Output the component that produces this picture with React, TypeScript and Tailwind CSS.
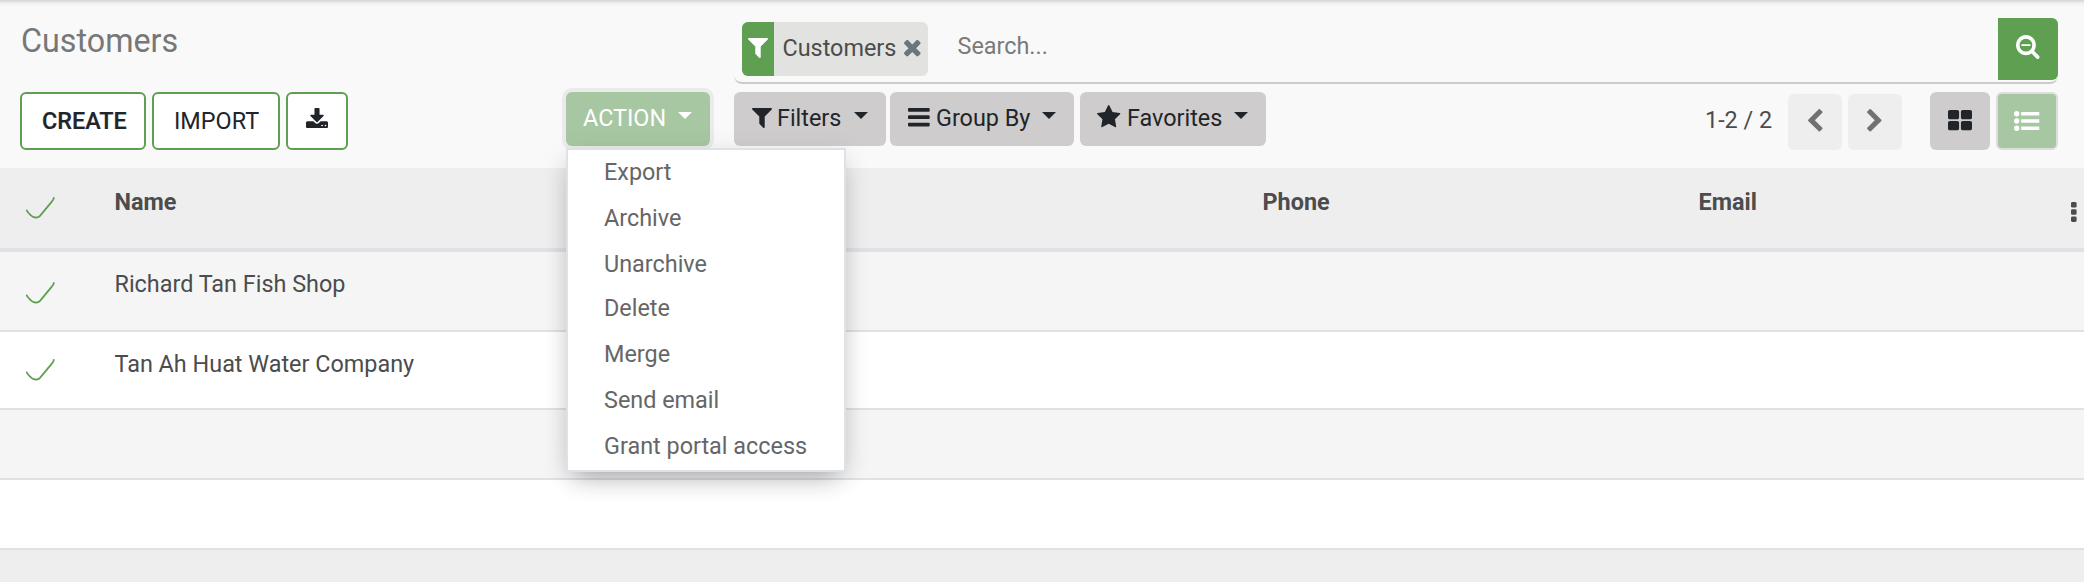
import type { ReactNode } from "react";

const PATHS = {
  filter: {
    box: "191 256 1410 1408",
    d: "M1595 295q17 41-14 70l-493 493v742q0 42-39 59-13 5-25 5-27 0-45-19l-256-256q-19-19-19-45v-486l-493-493q-31-29-14-70 17-39 59-39h1280q42 0 59 39z",
  },
  bars: {
    box: "128 256 1536 1280",
    d: "M1664 1344v128q0 26-19 45t-45 19h-1408q-26 0-45-19t-19-45v-128q0-26 19-45t45-19h1408q26 0 45 19t19 45zm0-512v128q0 26-19 45t-45 19h-1408q-26 0-45-19t-19-45v-128q0-26 19-45t45-19h1408q26 0 45 19t19 45zm0-512v128q0 26-19 45t-45 19h-1408q-26 0-45-19t-19-45v-128q0-26 19-45t45-19h1408q26 0 45 19t19 45z",
  },
  star: {
    box: "64 32 1664 1587",
    d: "M1728 647q0 22-26 48l-363 354 86 500q1 7 1 20 0 21-10.5 35.5t-30.5 14.5q-19 0-40-12l-449-236-449 236q-22 12-40 12-21 0-31.5-14.5t-10.5-35.5q0-6 2-20l86-500-364-354q-25-27-25-48 0-37 56-46l502-73 225-455q19-41 49-41t49 41l225 455 502 73q56 9 56 46z",
  },
  zoomOut: {
    box: "64 128 1664 1664",
    d: "M1088 800v64q0 13-9.5 22.5t-22.5 9.5h-576q-13 0-22.5-9.5t-9.5-22.5v-64q0-13 9.5-22.5t22.5-9.5h576q13 0 22.5 9.5t9.5 22.5zm128 32q0-185-131.5-316.5t-316.5-131.5-316.5 131.5-131.5 316.5 131.5 316.5 316.5 131.5 316.5-131.5 131.5-316.5zm512 832q0 53-37.5 90.5t-90.5 37.5q-54 0-90-38l-343-342q-179 124-399 124-143 0-273.5-55.5t-225-150-150-225-55.5-273.5 55.5-273.5 150-225 225-150 273.5-55.5 273.5 55.5 225 150 150 225 55.5 273.5q0 220-124 399l343 343q37 37 37 90z",
  },
  times: {
    box: "302 302 1188 1188",
    d: "M1490 1322q0 40-28 68l-136 136q-28 28-68 28t-68-28l-294-294-294 294q-28 28-68 28t-68-28l-136-136q-28-28-28-68t28-68l294-294-294-294q-28-28-28-68t28-68l136-136q28-28 68-28t68 28l294 294 294-294q28-28 68-28t68 28l136 136q28 28 28 68t-28 68l-294 294 294 294q28 28 28 68z",
  },
  left: {
    box: "410 26 1036 1612",
    d: "M1427 301l-531 531 531 531q19 19 19 45t-19 45l-166 166q-19 19-45 19t-45-19l-742-742q-19-19-19-45t19-45l742-742q19-19 45-19t45 19l166 166q19 19 19 45t-19 45z",
  },
  right: {
    box: "346 26 1036 1612",
    d: "M1363 877l-742 742q-19 19-45 19t-45-19l-166-166q-19-19-19-45t19-45l531-531-531-531q-19-19-19-45t19-45l166-166q19-19 45-19t45 19l742 742q19 19 19 45t-19 45z",
  },
  grid: {
    box: "64 128 1664 1408",
    d: "M832 1024v384q0 52-38 90t-90 38h-512q-52 0-90-38t-38-90v-384q0-52 38-90t90-38h512q52 0 90 38t38 90zm0-768v384q0 52-38 90t-90 38h-512q-52 0-90-38t-38-90v-384q0-52 38-90t90-38h512q52 0 90 38t38 90zm896 768v384q0 52-38 90t-90 38h-512q-52 0-90-38t-38-90v-384q0-52 38-90t90-38h512q52 0 90 38t38 90zm0-768v384q0 52-38 90t-90 38h-512q-52 0-90-38t-38-90v-384q0-52 38-90t90-38h512q52 0 90 38t38 90z",
  },
  list: {
    box: "0 192 1792 1408",
    d: "M384 1408a192 192 0 1 1-384 0a192 192 0 1 1 384 0zM384 896a192 192 0 1 1-384 0a192 192 0 1 1 384 0zM384 384a192 192 0 1 1-384 0a192 192 0 1 1 384 0zM512 256h1280v256h-1280zM512 768h1280v256h-1280zM512 1280h1280v256h-1280z",
  },
  download: {
    box: "64 0 1664 1536",
    d: "M1344 1344q0-26-19-45t-45-19-45 19-19 45 19 45 45 19 45-19 19-45zm256 0q0-26-19-45t-45-19-45 19-19 45 19 45 45 19 45-19 19-45zm128-224v320q0 40-28 68t-68 28h-1472q-40 0-68-28t-28-68v-320q0-40 28-68t68-28h465l135 136q58 56 136 56t136-56l136-136h464q40 0 68 28t28 68zm-325-569q17 41-14 70l-448 448q-18 19-45 19t-45-19l-448-448q-31-29-14-70 17-39 59-39h256v-448q0-26 19-45t45-19h256q26 0 45 19t19 45v448h256q42 0 59 39z",
  },
};

function Icon({ name, className }: { name: keyof typeof PATHS; className: string }) {
  const { box, d } = PATHS[name];
  return (
    <svg viewBox={box} preserveAspectRatio="none" fill="currentColor" overflow="visible" className={`block shrink-0 ${className}`}>
      <path d={d} />
    </svg>
  );
}

function Caret() {
  return (
    <svg viewBox="0 0 14 7" fill="currentColor" className="mt-5 block h-[7px] w-3.5 shrink-0">
      <path d="M0 0h14l-7 7z" />
    </svg>
  );
}

function Check() {
  return (
    <svg viewBox="0 0 30 22" fill="none" stroke="#5f9f52" strokeWidth="1.8" strokeLinecap="round" className="block h-[22px] w-[30px]">
      <path d="M1.8 13.4C2 14.4 3.5 16 5.5 18C8 20.8 12.5 21.6 15 18.8L26.4 5.2C28 3.4 28.8 2.4 28.8 1" />
    </svg>
  );
}

function MenuButton({ width, children }: { width: string; children: ReactNode }) {
  return (
    <button className={`flex h-[54px] items-start rounded-md bg-[#cfcccd] text-left leading-[30px] text-[#212529] ${width}`}>{children}</button>
  );
}

const ACTIONS = ["Export", "Archive", "Unarchive", "Delete", "Merge", "Send email", "Grant portal access"];

export default function App() {
  return (
    <div className="flex h-[582px] w-[2084px] flex-col overflow-hidden bg-[#eeeeee] font-['Roboto',sans-serif] text-[23.4px] leading-[30px] text-[#4c4c4c]">
      <header className="flex h-[168px] shrink-0 bg-[#f9f9f9] bg-[linear-gradient(to_bottom,#d4d4d4_0px,#e6e6e6_2px,#f3f3f3_4px,#f9f9f9_7px)]">
        <div className="w-[734px] shrink-0">
          <h1 className="h-[92px] pt-[21px] pl-[21px] text-[32.3px] leading-[40px] text-[#777777]">Customers</h1>
          <div className="flex items-start pl-5">
            <button className="mr-1.5 h-[58px] w-[126px] rounded-md border-2 border-[#5f9f52] bg-white pt-[11px] pb-3 pl-5 text-left font-medium text-[#212529] [-webkit-text-stroke:0.2px_#212529]">
              CREATE
            </button>
            <button className="mr-1.5 h-[58px] w-32 rounded-md border-2 border-[#5f9f52] bg-white pt-[11px] pb-3 pl-5 text-left text-[#212529]">
              IMPORT
            </button>
            <button className="flex h-[58px] w-[62px] items-start rounded-md border-2 border-[#5f9f52] bg-white pt-3.5 pl-[18px] text-[#212529]">
              <Icon name="download" className="h-[20px] w-[22px]" />
            </button>
            <div className="relative ml-[218px]">
              <button className="flex h-[54px] w-36 items-start rounded-md bg-[#a7c7a2] pl-[17px] text-left text-white shadow-[0_0_0_4px_#ebebeb]">
                <span className="mt-[11px] w-[95px]">ACTION</span>
                <Caret />
              </button>
              <ul className="absolute top-14 left-0 z-10 flex h-[324px] w-[280px] flex-col border-2 border-[#dee2e6] bg-white text-[#666666] shadow-[0_12px_24px_-8px_rgba(0,0,0,0.3),0_4px_28px_rgba(0,0,0,0.07)]">
                {ACTIONS.map((a) => (
                  <li key={a} className={`shrink-0 pl-9 leading-[44px] ${a === "Unarchive" ? "h-[44px]" : "h-[46px]"}`}>
                    {a}
                  </li>
                ))}
              </ul>
            </div>
          </div>
        </div>

        <div className="w-[1324px] shrink-0 pt-4">
          <div className="flex h-[68px] items-start rounded-lg border-b-2 border-[#cccccc]">
            <div className="mt-1.5 ml-2 flex h-[54px] w-[186px] shrink-0 overflow-hidden rounded-md bg-[#e2e2e0]">
              <span className="w-8 bg-[#5f9f52] pt-4 pl-1.5 text-white">
                <Icon name="filter" className="h-5 w-5" />
              </span>
              <span className="w-[130px] pt-[11px] pl-[8.5px]">Customers</span>
              <Icon name="times" className="mt-[17px] h-[16.6px] w-[16.6px] text-[#6c757d]" />
            </div>
            <input
              placeholder="Search..."
              className="mt-[15px] ml-[29.5px] h-[30px] min-w-0 flex-1 bg-transparent p-0 outline-none placeholder:text-[#7a7a7a]"
            />
            <button className="mt-0.5 h-[62px] w-[60px] shrink-0 rounded-r-md bg-[#5f9f52] pt-0.5 pl-[17.5px] text-white">
              <Icon name="zoomOut" className="-mt-1.5 h-[24px] w-[23.5px]" />
            </button>
          </div>

          <div className="mt-2 flex items-start">
            <MenuButton width="w-[152px]">
              <Icon name="filter" className="mt-4 ml-[17.5px] h-5 w-5" />
              <span className="mt-[11px] ml-[5.5px] w-[77px]">Filters</span>
              <Caret />
            </MenuButton>
            <div className="w-1" />
            <MenuButton width="w-[184px]">
              <Icon name="bars" className="mt-4 ml-[18.3px] h-[18.4px] w-[21.7px]" />
              <span className="mt-[11px] ml-[6px] w-[106px]">Group By</span>
              <Caret />
            </MenuButton>
            <div className="w-1.5" />
            <MenuButton width="w-[186px]">
              <Icon name="star" className="mt-[13px] ml-[17.3px] h-[22.2px] w-[23.4px]" />
              <span className="mt-[11px] ml-[6.3px] w-[107px]">Favorites</span>
              <Caret />
            </MenuButton>

            <span className="mt-[13px] ml-[439px] w-[83px]">1-2 / 2</span>
            <button className="mt-0.5 flex h-14 w-[54px] items-start rounded-md bg-[#eeeeee] pt-[14.7px] pl-5 text-[#6f7172]">
              <Icon name="left" className="h-[22.6px] w-[14.6px]" />
            </button>
            <button className="mt-0.5 ml-1.5 flex h-14 w-[54px] items-start rounded-md bg-[#eeeeee] pt-[14.7px] pl-[18.8px] text-[#6f7172]">
              <Icon name="right" className="h-[22.6px] w-[14.6px]" />
            </button>
            <button className="ml-7 flex h-[58px] w-[60px] items-start rounded-md bg-[#cfcccd] pt-[18px] pl-[18.3px] text-[#212529]">
              <Icon name="grid" className="h-[20.3px] w-6" />
            </button>
            <button className="ml-1.5 flex h-[58px] w-[62px] items-start rounded-md border-2 border-[#dddddd] bg-[#a7c7a2] pt-[17px] pl-[15.7px] text-white">
              <Icon name="list" className="h-[20px] w-[25.3px]" />
            </button>
          </div>
        </div>
      </header>

      <div className="flex h-[84px] shrink-0 items-start border-b-4 border-[#dee2e6] bg-[#eeeeee] font-bold">
        <div className="w-[114.5px] pt-[29px] pl-[24.6px]">
          <Check />
        </div>
        <div className="w-[1148px] pt-[19px]">Name</div>
        <div className="w-[436px] pt-[19px]">Phone</div>
        <div className="w-[372.8px] pt-[19px]">Email</div>
        <svg viewBox="0 0 6 20" fill="currentColor" className="mt-[34px] block h-5 w-1.5">
          <rect width="5.6" height="5.6" rx="1.4" />
          <rect y="7.2" width="5.6" height="5.6" rx="1.4" />
          <rect y="14.4" width="5.6" height="5.6" rx="1.4" />
        </svg>
      </div>
      <div className="flex h-20 shrink-0 items-start border-b-2 border-[#dee2e6] bg-[#f5f5f5]">
        <div className="w-[114.5px] pt-[29.5px] pl-[24.6px]">
          <Check />
        </div>
        <div className="pt-[17px]">Richard Tan Fish Shop</div>
      </div>
      <div className="flex h-[78px] shrink-0 items-start border-b-2 border-[#dee2e6] bg-white">
        <div className="w-[114.5px] pt-[27px] pl-[24.6px]">
          <Check />
        </div>
        <div className="pt-[17px]">Tan Ah Huat Water Company</div>
      </div>
      <div className="h-[70px] shrink-0 border-b-2 border-[#dee2e6] bg-[#f5f5f5]" />
      <div className="h-[70px] shrink-0 border-b-2 border-[#dee2e6] bg-white" />
    </div>
  );
}
